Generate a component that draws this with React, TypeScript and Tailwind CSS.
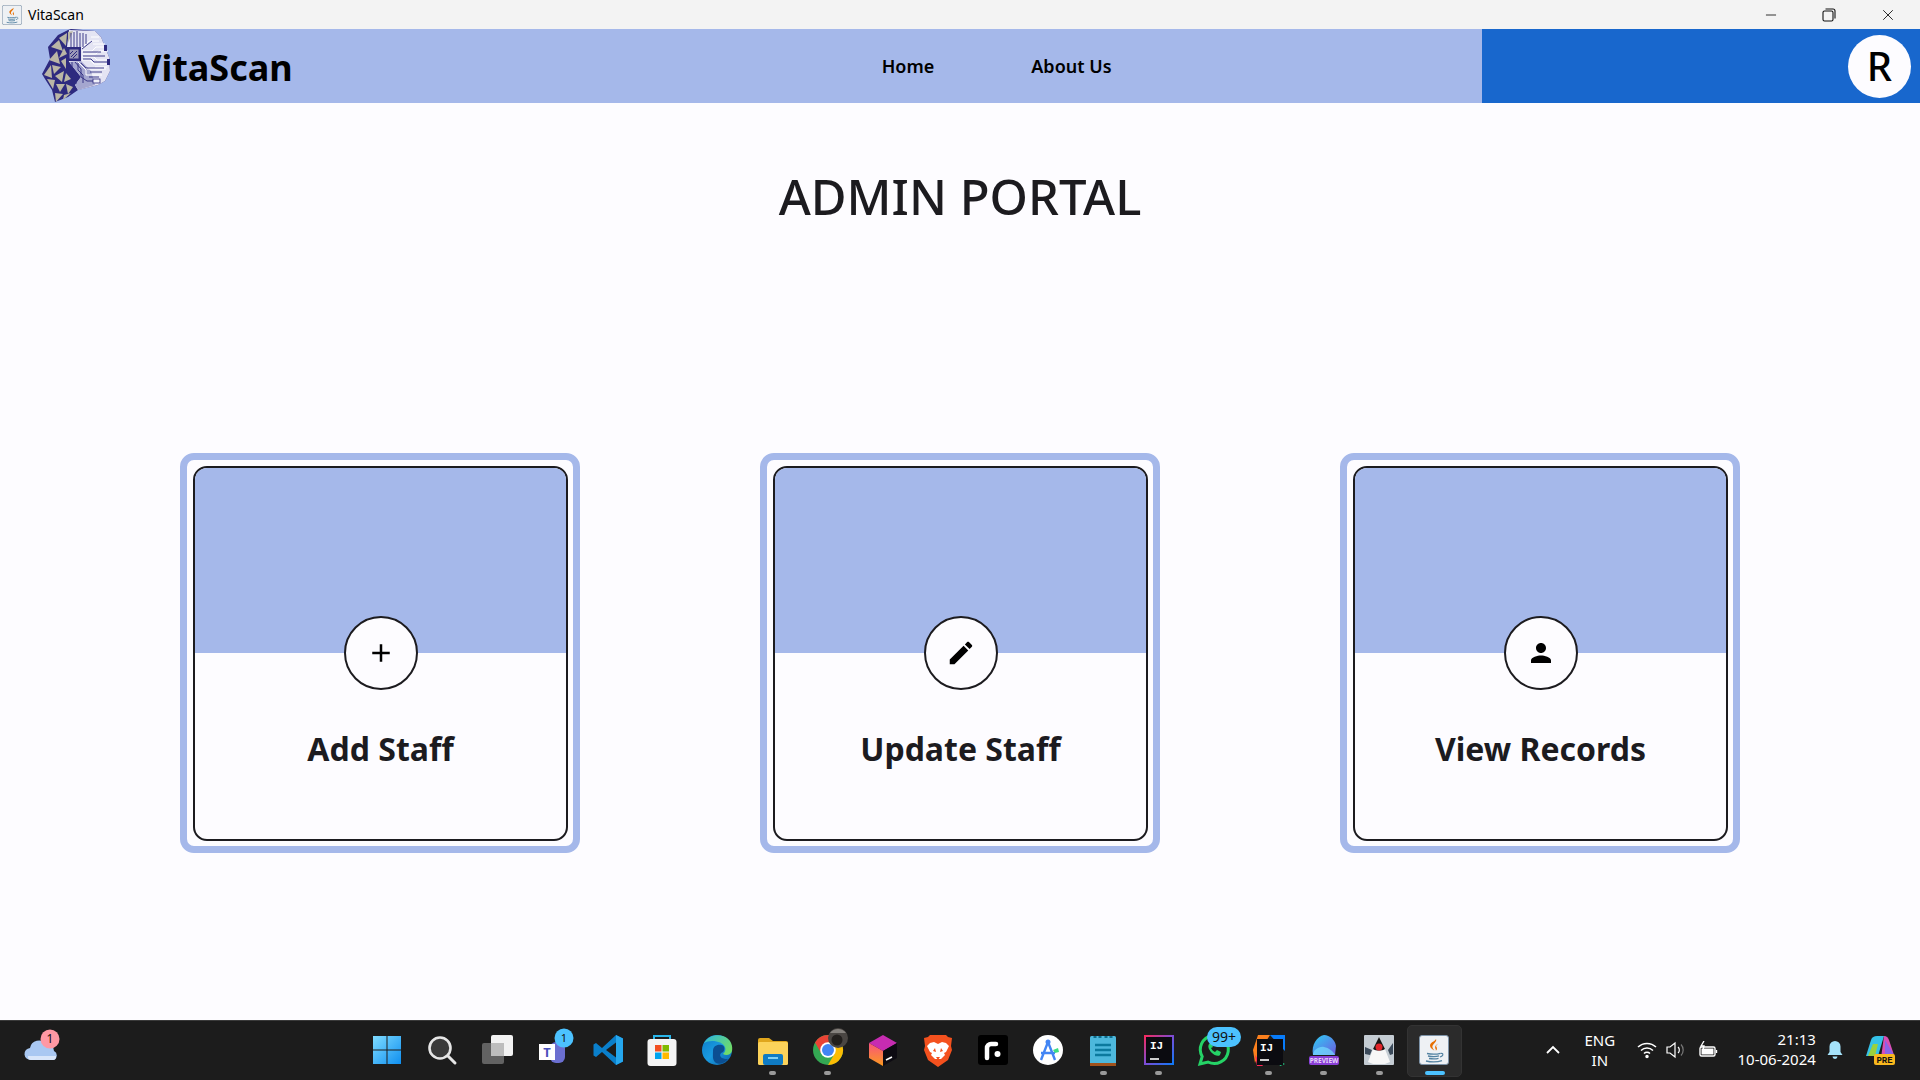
import React from 'react';
import { Minus, X } from 'lucide-react';

const sans = 'font-["Noto_Sans",sans-serif]';

const JavaIcon = ({ size = 30 }: { size?: number }) => (
  <svg width={size} height={size} viewBox="0 0 30 30">
    <rect x="0.5" y="0.5" width="29" height="29" rx="2.5" fill="#eef1f4" stroke="#7d93a8" />
    <path d="M17 4c1.5 3-4 5-3.6 8 .2 1.600 1.300 2.600 2 3.500-2.800-1.500-5-3.500-4.200-6C12 7 16 6.500 17 4z" fill="#e76f00" />
    <path d="M19.500 8.500c-2.500 1.500-3.800 2.600-3.300 4.500.2 1 1 1.500.6 2.800 1.800-1.300 1.200-3 .5-4-.6-1 .3-2 2.200-3.300z" fill="#e76f00" />
    <path d="M8 18.500c4 .8 10 .8 13.500-.2M9 21c3.500.7 8.500.7 11-.1M10 23.500c3 .5 7 .5 9.500-.1M7 26c5 1.200 12 1 16-.4" stroke="#5382a1" strokeWidth="1.300" fill="none" />
    <path d="M21.500 18.500c3-.8 3.500 2.500-.5 3.500" stroke="#5382a1" strokeWidth="1.100" fill="none" />
  </svg>
);

// head logo, drawn on the crop's own 85x78 grid
const tanTriangles = [
  '24,11 32,6 31,19', '16,20 24,13 28,24', '29,21 32,27 24,31', '14,33 22,24 25,37', '26,34 31,31 31,42',
  '17,38 26,40 19,47', '9,48 16,38 17,51', '20,49 29,44 27,55', '31,46 36,52 29,55', '12,52 20,53 18,62',
  '21,57 30,57 25,65', '31,57 38,60 33,67', '20,66 28,67 21,75', '29,68 36,66 28,73', '33,5 38,4 33,16',
];
const lightLines = [
  'M47 24h10l4-4h8', 'M47 27h14l3-3h9', 'M47 30h12l3 3h12', 'M47 33h8l4 4h15', 'M46 36l6 6h19', 'M43 35l8 8v5h16',
  'M47 21l7-7h10', 'M56 10h8', 'M58 17h12', 'M60 40h12',
];
const darkLines = [
  'M36 20V6', 'M39 20V5', 'M42 20V4', 'M45 20V6', 'M48 20V6', 'M51 17V7', 'M47 22l10-8', 'M48 25h18', 'M48 29h22', 'M48 32h8l3 3h14',
  'M46 36l5 5h18', 'M40 35l6 7v8l6 4h8', 'M37 35v8l4 5v9', 'M43 36v7l5 5v8', 'M34 35v6l3 5v8l3 4', 'M55 45h12', 'M54 50h10',
];

const Logo = () => (
  <svg width="85" height="74" viewBox="0 2 85 74" className="shrink-0">
    <path d="M33 3 36 2 60 4 66 10 74 30 75 44 70 54 63 58 43 63 33 70 20 75 17 63 10 52 7 47 15 32 13 20 23 8Z" fill="#2e2a7f" />
    <path d="M34 3 60 4 66 10 74 30 75 44 70 54 63 58 43 63 40 58 46 50 34 35 32 20Z" fill="#e4e4f3" />
    <path d="M34 35 46 50 40 58 43 63 60 58 56 44 46 34z" fill="#a4a6cf" />
    {tanTriangles.map((points, i) => (
      <polygon key={i} points={points} fill="#bab6a6" />
    ))}
    {lightLines.map((d, i) => (
      <path key={i} d={d} fill="none" stroke="#fff" strokeWidth="1" />
    ))}
    {darkLines.map((d, i) => (
      <path key={i} d={d} fill="none" stroke="#2e2a7f" strokeWidth="0.900" />
    ))}
    <rect x="32" y="20" width="14" height="14" fill="#2e2a7f" />
    <rect x="34.500" y="22.500" width="9" height="9" fill="#9c99b8" />
    <path d="M36 30l6-6M38 31l4-4M35 27l3-3" stroke="#2e2a7f" strokeWidth="1" />
    <rect x="69" y="18" width="3" height="6" fill="#2e2a7f" />
    <rect x="72" y="32" width="3" height="6" fill="#2e2a7f" />
    <rect x="58" y="52" width="7" height="4" fill="#f1f1fa" stroke="#2e2a7f" strokeWidth="0.800" />
  </svg>
);

const actions = [
  { label: 'Add Staff', icon: 'M19 13h-6v6h-2v-6H5v-2h6V5h2v6h6v2z' },
  {
    label: 'Update Staff',
    icon: 'M3 17.25V21h3.75L17.81 9.94l-3.75-3.75L3 17.25zM20.71 7.04c.39-.39.39-1.02 0-1.41l-2.34-2.34c-.39-.39-1.02-.39-1.41 0l-1.83 1.83 3.75 3.75 1.83-1.83z',
  },
  {
    label: 'View Records',
    icon: 'M12 12c2.21 0 4-1.79 4-4s-1.79-4-4-4-4 1.79-4 4 1.79 4 4 4zm0 2c-2.67 0-8 1.34-8 4v2h16v-2c0-2.66-5.33-4-8-4z',
  },
];

const ActionCard = ({ label, icon }: { label: string; icon: string }) => (
  <div className="w-[400px] h-[400px] border-[7px] border-[#a5b8ea] rounded-[14px] pt-[6px] pl-[6px] pr-[5px] pb-[5px]">
    <div className="relative flex flex-col h-full border-2 border-[#1c1b1f] rounded-[14px] overflow-hidden">
      <div className="h-[185px] bg-[#a5b8ea]" />
      <div className="flex-1 flex justify-center pt-[70px]">
        <span className="text-[32px] leading-[52px] font-bold text-[#1c1b1f]">{label}</span>
      </div>
      <div className="absolute left-1/2 top-[148px] -translate-x-1/2 w-[74px] h-[74px] rounded-full border-2 border-[#1c1b1f] bg-[#fdfcff] flex items-center justify-center">
        <svg width="30" height="30" viewBox="0 0 24 24" fill="#000">
          <path d={icon} />
        </svg>
      </div>
    </div>
  </div>
);

const Badge = ({ x, y, r = 8, fill, text }: { x: number; y: number; r?: number; fill: string; text: string }) => (
  <g>
    <circle cx={x} cy={y} r={r} fill={fill} />
    <text x={x} y={y + 4} textAnchor="middle" fontSize="11" fontFamily="Noto Sans" fill="#111">{text}</text>
  </g>
);

const Windows = () => (
  <svg width="34" height="34" viewBox="0 0 34 34">
    <defs>
      <linearGradient id="win" x1="0" y1="0" x2="1" y2="1">
        <stop offset="0" stopColor="#7fdcff" />
        <stop offset="1" stopColor="#0f8ff0" />
      </linearGradient>
    </defs>
    <path d="M3 3h13.500v13.500H3zM17.500 3H31v13.500H17.500zM3 17.500h13.500V31H3zM17.500 17.500H31V31H17.500z" fill="url(#win)" />
  </svg>
);

const Search = () => (
  <svg width="34" height="34" viewBox="0 0 34 34">
    <circle cx="15" cy="15" r="10.500" fill="#3a3a3a" stroke="#e6e6e6" strokeWidth="2.600" />
    <path d="M23 23l7 7" stroke="#e6e6e6" strokeWidth="3" strokeLinecap="round" />
  </svg>
);

const TaskView = () => (
  <svg width="34" height="34" viewBox="0 0 34 34">
    <rect x="11" y="2" width="22" height="21" rx="2" fill="#f2f2f2" />
    <rect x="2" y="10" width="22" height="21" rx="2" fill="#6e6e6e" fillOpacity="0.850" />
    <rect x="11" y="10" width="13" height="13" fill="#bdbdbd" />
  </svg>
);

const Teams = () => (
  <svg width="34" height="34" viewBox="0 0 34 34" className="overflow-visible">
    <rect x="15" y="9" width="15" height="21" rx="6" fill="#6b6fd0" />
    <circle cx="26" cy="9" r="5" fill="#7b83eb" />
    <rect x="4" y="11" width="16" height="16" fill="#fff" />
    <text x="12" y="24" textAnchor="middle" fontSize="13" fontWeight="700" fontFamily="Noto Sans" fill="#4b53bc">T</text>
    <Badge x={29} y={5} r={9.500} fill="#4cc2ff" text="1" />
  </svg>
);

const VsCode = () => (
  <svg width="34" height="34" viewBox="0 0 34 34" className="translate-x-[2px]">
    <path d="M24 2l7 3.500v23L24 32 10 19l-6 5-2.500-1.500V11.500L4 10l6 5z" fill="#0a7fcb" />
    <path d="M24 9.500 14 17l10 7.500z" fill="#1c1c1c" />
    <path d="M24 2l7 3.500v23L24 32z" fill="#25a7ee" />
  </svg>
);

const Store = () => (
  <svg width="34" height="34" viewBox="0 0 34 34">
    <path d="M9 9V3h16v6" fill="none" stroke="#29b6ea" strokeWidth="2" />
    <rect x="2.500" y="6" width="29" height="27" rx="3" fill="#f4f4f4" />
    <rect x="10" y="12" width="6.500" height="6.500" fill="#f25022" />
    <rect x="17.500" y="12" width="6.500" height="6.500" fill="#7fba00" />
    <rect x="10" y="19.500" width="6.500" height="6.500" fill="#00a4ef" />
    <rect x="17.500" y="19.500" width="6.500" height="6.500" fill="#ffb900" />
  </svg>
);

const Edge = () => (
  <svg width="34" height="34" viewBox="0 0 34 34">
    <defs>
      <linearGradient id="edge" x1="0" y1="0" x2="1" y2="1">
        <stop offset="0" stopColor="#0c7bc9" />
        <stop offset="0.500" stopColor="#1a9be0" />
        <stop offset="1" stopColor="#0a5fa8" />
      </linearGradient>
      <linearGradient id="edgeTop" x1="0" y1="0" x2="1" y2="0.600">
        <stop offset="0" stopColor="#2cb5e0" />
        <stop offset="1" stopColor="#6fdc6a" />
      </linearGradient>
    </defs>
    <circle cx="17" cy="17" r="15" fill="url(#edge)" />
    <path d="M4 10C8 2 20 0 27 5c4 3 6 8 5 13-1 4-6 5-9 3 2-2 3-4 2-7C23 8 10 6 4 10z" fill="url(#edgeTop)" />
    <path d="M13 18c0-5 4-7 9-6 3 1 3 5 1 7-3 1-4 4-1 6 2 1 4 1 6 1-3 4-8 6-12 4-4-3-3-8-3-12z" fill="#0b4f92" />
  </svg>
);

const Folder = () => (
  <svg width="34" height="34" viewBox="0 0 34 34">
    <path d="M2 7a2 2 0 0 1 2-2h9l4 3h13a2 2 0 0 1 2 2v4H2z" fill="#e0a61c" />
    <rect x="2" y="9" width="30" height="23" rx="1.500" fill="#fcd35a" />
    <rect x="7" y="21" width="20" height="11" rx="2" fill="#0f7bc4" />
    <rect x="12" y="24" width="10" height="2" fill="#7fd0f5" />
  </svg>
);

const Chrome = () => (
  <svg width="34" height="34" viewBox="0 0 34 34" className="overflow-visible">
    <circle cx="17" cy="17" r="15" fill="#34a853" />
    <path d="M4 9.500A15 15 0 0 1 30 9.500H17L10.500 20.750z" fill="#ea4335" />
    <path d="M30 9.500A15 15 0 0 1 17 32L23.500 20.750 17 9.500z" fill="#fbbc04" />
    <circle cx="17" cy="17" r="7.800" fill="#fff" />
    <circle cx="17" cy="17" r="6" fill="#4285f4" />
    <circle cx="27" cy="5" r="10" fill="#4a4643" />
    <circle cx="26" cy="7" r="5.500" fill="#221f1d" />
    <path d="M19 0a10 10 0 0 1 16 0z" fill="#85817d" />
  </svg>
);

const Toolbox = () => (
  <svg width="34" height="34" viewBox="0 0 34 34">
    <defs>
      <linearGradient id="tb" x1="0" y1="0" x2="0" y2="1">
        <stop offset="0" stopColor="#f9537d" />
        <stop offset="1" stopColor="#fb9b1e" />
      </linearGradient>
    </defs>
    <path d="M17 2 31 10 17 18 3 10z" fill="#c72cb1" />
    <path d="M3 10l14 8v15L3 25z" fill="url(#tb)" />
    <path d="M31 10 17 18v15l14-8z" fill="#0d0b12" />
    <path d="M20 27l6-3" stroke="#fff" strokeWidth="1.600" />
  </svg>
);

const Brave = () => (
  <svg width="34" height="34" viewBox="0 0 34 34">
    <path d="M9 2h16l2 2 4 1-1 8 1 4-4 10-10 7-10-7L3 17l1-4-1-8 4-1z" fill="#f4511e" />
    <path d="M9 10l4-1 4 2 4-2 4 1 3 3-3 6-2 1 1 2-4 4h-6l-4-4 1-2-2-1-3-6z" fill="#fff" />
    <path d="M14 15l-2 3 3 1zM20 15l2 3-3 1zM15 24h4l-2 3z" fill="#f4511e" />
  </svg>
);

const Replit = () => (
  <svg width="34" height="34" viewBox="0 0 34 34">
    <rect x="2" y="2" width="30" height="30" rx="3" fill="#000" />
    <path d="M11 25V15a4 4 0 0 1 4-4h5" fill="none" stroke="#fff" strokeWidth="4.500" strokeLinecap="round" />
    <circle cx="21.500" cy="21" r="3" fill="#fff" />
  </svg>
);

const AndroidStudio = () => (
  <svg width="34" height="34" viewBox="0 0 34 34">
    <circle cx="17" cy="17" r="15" fill="#fff" />
    <circle cx="17" cy="9" r="2.500" fill="#4285f4" />
    <path d="M17 9 10 27M17 9l7 18M10 20h14" fill="none" stroke="#4285f4" strokeWidth="2.400" />
    <path d="M22 17l5-2 1 4-4 1z" fill="#3ddc84" />
  </svg>
);

const Notepad = () => (
  <svg width="34" height="34" viewBox="0 0 34 34">
    <rect x="4" y="3" width="26" height="28" rx="1.500" fill="#4db8dc" />
    <rect x="4" y="30" width="26" height="3" fill="#a0521c" />
    <path d="M9 3v2M14 3v2M20 3v2M25 3v2" stroke="#0d6d8c" strokeWidth="3" />
    <path d="M9 12h16M9 17h16M9 22h16" stroke="#0c7a9e" strokeWidth="2.400" />
  </svg>
);

const IntelliJ = ({ warm = false }: { warm?: boolean }) => (
  <svg width="34" height="34" viewBox="0 0 34 34">
    <defs>
      <linearGradient id="ijFrame" x1="0" y1="0" x2="1" y2="1">
        <stop offset="0" stopColor="#fe2857" />
        <stop offset="0.500" stopColor="#7b4cd6" />
        <stop offset="1" stopColor="#087cfa" />
      </linearGradient>
    </defs>
    {warm ? (
      <>
        <path d="M6 2h12L8 18 3 30 1 17z" fill="#fc801d" />
        <path d="M18 2h15v16l-6-6z" fill="#087cfa" />
        <path d="M3 22l8 11h-6z" fill="#fe2857" />
        <path d="M26 28l7 3-5 2z" fill="#21d789" />
      </>
    ) : (
      <rect x="2" y="2" width="30" height="30" fill="url(#ijFrame)" />
    )}
    <rect x={warm ? 5 : 4} y={warm ? 6 : 4} width="26" height="26" fill="#0b0b10" />
    <text x="8" y={warm ? 18 : 16} fontSize="11" fontWeight="700" fontFamily="Liberation Mono" fill="#fff">IJ</text>
    <path d={warm ? 'M8 27h9' : 'M8 26h9'} stroke="#fff" strokeWidth="1.600" />
  </svg>
);

const WhatsApp = () => (
  <svg width="34" height="34" viewBox="0 0 34 34" className="overflow-visible">
    <path d="M3 31l2.200-7.500A14 14 0 1 1 11 29z" fill="#1c1c1c" stroke="#25d366" strokeWidth="3" />
    <path d="M12 11c-2 3 1 7 3 9s6 4 8 2l1-3-4-2-2 2c-2-1-3-2-4-4l2-1-2-4z" fill="#25d366" />
    <rect x="10" y="-6" width="34" height="20" rx="10" fill="#4cc2ff" />
    <text x="27" y="9" textAnchor="middle" fontSize="14" fontFamily="Noto Sans" fill="#111">99+</text>
  </svg>
);

const DataStudio = () => (
  <svg width="34" height="34" viewBox="0 0 34 34" className="overflow-visible">
    <defs>
      <linearGradient id="ds" x1="0" y1="0" x2="1" y2="1">
        <stop offset="0" stopColor="#2cd0f5" />
        <stop offset="1" stopColor="#6d5be0" />
      </linearGradient>
    </defs>
    <path d="M6 22C4 12 10 3 17 2c6 0 11 5 12 11l-1 9z" fill="url(#ds)" />
    <path d="M6 22c0-5 6-9 11-8 5 1 9 4 11 8z" fill="#74e0ff" fillOpacity="0.700" />
    <rect x="2" y="23" width="30" height="9" rx="2" fill="#8a3fd6" />
    <text x="17" y="30" textAnchor="middle" fontSize="6.500" fontWeight="700" fontFamily="Noto Sans" fill="#e6d4fa">PREVIEW</text>
  </svg>
);

const Duke = () => (
  <svg width="34" height="34" viewBox="0 0 34 34">
    <rect x="2" y="2" width="30" height="30" rx="1" fill="#c4ccd3" />
    <path d="M17 4 23 16l5 13-5 2H11l-5-2 5-13z" fill="#f7f7f7" />
    <path d="M17 4l6 12c-3 2-9 2-12 0z" fill="#141414" />
    <circle cx="17" cy="14" r="3.500" fill="#e0242a" />
    <path d="M3 14l7 3-2 5-5-1zM31 10l-5 7 2 5 3-1z" fill="#3b4a5a" />
  </svg>
);

const apps = [
  { Icon: Windows },
  { Icon: Search },
  { Icon: TaskView },
  { Icon: Teams },
  { Icon: VsCode },
  { Icon: Store },
  { Icon: Edge },
  { Icon: Folder, running: true },
  { Icon: Chrome, running: true },
  { Icon: Toolbox },
  { Icon: Brave },
  { Icon: Replit },
  { Icon: AndroidStudio },
  { Icon: Notepad, running: true },
  { Icon: () => <IntelliJ />, running: true },
  { Icon: WhatsApp },
  { Icon: () => <IntelliJ warm />, running: true },
  { Icon: DataStudio, running: true },
  { Icon: Duke, running: true },
];

const Taskbar = () => (
  <div className="h-[60px] shrink-0 flex items-center bg-[#1c1c1c] border-t border-[#3a3a3a] text-white">
    <div className="w-[359px] shrink-0 pl-[24px] pb-[6px] flex items-center">
      <svg width="36" height="36" viewBox="0 0 36 36" className="overflow-visible">
        <path d="M7 30a6 6 0 0 1-1-12 9 9 0 0 1 16-4 7 7 0 0 1 8 7 5 5 0 0 1 0 9z" fill="#a9c8f2" />
        <path d="M4 26h28v1a3 3 0 0 1-3 3H7a3 3 0 0 1-3-3z" fill="#d8e6fa" />
        <circle cx="26" cy="9" r="9.500" fill="#ff98a4" />
        <text x="26" y="13" textAnchor="middle" fontSize="12" fontFamily="Noto Sans" fill="#111">1</text>
      </svg>
    </div>
    <div className="flex shrink-0">
      {apps.map(({ Icon, running }, i) => (
        <div key={i} className="relative w-[55.15px] h-[59px] pb-[2px] flex items-center justify-center">
          <Icon />
          {running && <span className="absolute bottom-[5px] left-[24px] w-[7px] h-[4px] rounded-full bg-[#9a9a9a]" />}
        </div>
      ))}
      <div className="relative w-[55.15px] h-[59px] pb-[2px] flex items-center justify-center">
        <div className="absolute inset-x-0 top-[4px] bottom-[3px] rounded-[5px] bg-[#2b2b2b] border border-[#333]" />
        <div className="relative"><JavaIcon /></div>
        <span className="absolute bottom-[5px] left-[18px] w-[20px] h-[4px] rounded-full bg-[#4cc2ff]" />
      </div>
    </div>
    <div className="flex items-center ml-[78px] pb-[2px] text-[15px] leading-[20px] text-white">
      <div className="w-[26px] flex justify-center">
        <svg width="16" height="10" viewBox="0 0 16 10" fill="none" stroke="#fff" strokeWidth="1.800"><path d="M2 8l6-6 6 6" /></svg>
      </div>
      <div className="w-[68px] text-center">
        <div>ENG</div>
        <div>IN</div>
      </div>
      <div className="w-[26px] flex justify-center">
        <svg width="20" height="18" viewBox="0 0 20 18" fill="none" stroke="#fff" strokeWidth="1.500">
          <path d="M1 6a13 13 0 0 1 18 0M4 9.500a8.500 8.500 0 0 1 12 0M7 12.500a4.200 4.200 0 0 1 6 0" />
          <circle cx="10" cy="15.500" r="1" fill="#fff" />
        </svg>
      </div>
      <div className="w-[32px] flex justify-center">
        <svg width="20" height="18" viewBox="0 0 20 18" fill="none" stroke="#fff" strokeWidth="1.200">
          <path d="M1 6h3l5-4v14l-5-4H1z" />
          <path d="M12 6a4 4 0 0 1 0 6" />
          <path d="M15 3.500a8 8 0 0 1 0 11" stroke="#777" />
        </svg>
      </div>
      <div className="w-[32px] flex justify-center">
        <svg width="20" height="18" viewBox="0 0 20 18" fill="none" stroke="#fff" strokeWidth="1.400">
          <rect x="2" y="6" width="15" height="9" rx="1.500" />
          <path d="M3.500 7.500h12v6h-12z" fill="#fff" stroke="none" />
          <path d="M18.500 9v3" />
          <path d="M6 0 3 5h3l-1 4" strokeWidth="1.300" />
        </svg>
      </div>
      <div className="w-[92px] text-right pb-[2px]">
        <div>21:13</div>
        <div>10-06-2024</div>
      </div>
      <div className="w-[38px] flex justify-center">
        <svg width="18" height="20" viewBox="0 0 18 20" fill="#a5e3fb">
          <path d="M9 1a5.500 5.500 0 0 1 5.500 5.500V12l2 3h-15l2-3V6.500A5.500 5.500 0 0 1 9 1z" />
          <path d="M6.500 16.500h5a2.500 2.500 0 0 1-5 0z" />
        </svg>
      </div>
      <div className="w-[52px] flex justify-center">
        <svg width="30" height="32" viewBox="0 0 30 32" className="overflow-visible">
          <path d="M1 22 6 6c1-3 3-4 6-4h7l-6 20z" fill="#35c2e8" />
          <path d="M3 22 8 10h5l-3 12z" fill="#9bd13d" />
          <path d="M19 2c3 0 4 2 5 4l5 15c0 2-2 3-4 3h-9z" fill="#d74fb5" />
          <path d="M20 6l9 15h-9z" fill="#8a63e8" />
          <rect x="9" y="20" width="21" height="11" rx="2" fill="#f9b81e" />
          <text x="19.500" y="29" textAnchor="middle" fontSize="9" fontWeight="700" fontFamily="Liberation Mono" fill="#111">PRE</text>
        </svg>
      </div>
    </div>
  </div>
);

export default function App() {
  return (
    <div className={`w-[1920px] h-[1080px] flex flex-col overflow-hidden bg-[#fdfcff] ${sans}`}>
      {/* Title bar */}
      <div className="h-[29px] shrink-0 flex items-center bg-[#f3f3f3] text-black">
        <div className="ml-[2px]"><JavaIcon size={20} /></div>
        <span className="ml-[6px] text-[14px]">VitaScan</span>
        <div className="ml-auto flex items-center mr-[1px]">
          <div className="w-[58px] flex justify-center"><Minus size={16} strokeWidth={1.200} /></div>
          <div className="w-[58px] mr-[1px] flex justify-center">
            <svg width="14" height="14" viewBox="0 0 14 14" fill="none" stroke="#111" strokeWidth="1.100">
              <rect x="1" y="3" width="10" height="10" rx="1.500" />
              <path d="M3.500 1H11a2 2 0 0 1 2 2v7.500" />
            </svg>
          </div>
          <div className="w-[58px] mr-[2px] flex justify-center"><X size={18} strokeWidth={1.100} /></div>
        </div>
      </div>

      {/* Header */}
      <div className="h-[74px] shrink-0 flex bg-[#a5b8ea]">
        <div className="w-[1482px] flex items-center pl-[35px]">
          <Logo />
          <span className="ml-[18px] pt-[4px] text-[36px] font-bold text-black">VitaScan</span>
          <nav className="ml-[589px] flex gap-[97px] text-[18px] font-semibold text-black">
            <span>Home</span>
            <span>About Us</span>
          </nav>
        </div>
        <div className="flex-1 flex items-center justify-end pr-[9px] bg-[#1867cd]">
          <div className="w-[63px] h-[63px] rounded-full bg-[#fdfcff] flex items-center justify-center text-[40px] font-medium text-black">R</div>
        </div>
      </div>

      {/* Main */}
      <div className="flex-1 flex flex-col items-center">
        <h1 className="mt-[59px] h-[68px] text-[49px] leading-[68px] font-medium text-[#1c1b1f]">ADMIN PORTAL</h1>
        <div className="mt-[223px] flex justify-center gap-[180px]">
          {actions.map((action) => (
            <ActionCard key={action.label} label={action.label} icon={action.icon} />
          ))}
        </div>
      </div>

      <Taskbar />
    </div>
  );
}
